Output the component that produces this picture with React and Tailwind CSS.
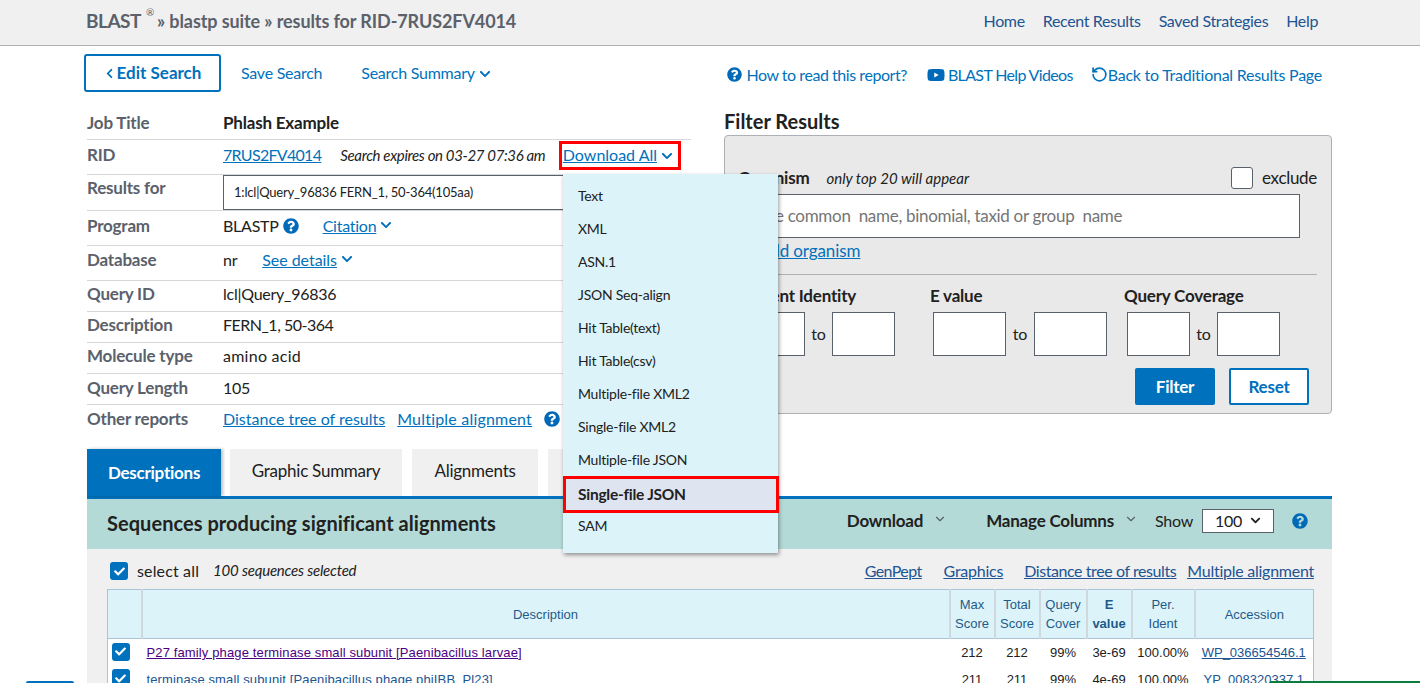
import React from "react";
import { FaChevronDown, FaChevronLeft, FaQuestionCircle, FaYoutube, FaCheck } from "react-icons/fa";
import { RotateCcw, ChevronDown } from "lucide-react";

const Q = ({ c = "" }) => <FaQuestionCircle className={"inline text-[#0069b8] " + c} size={16} />;
const Chev = ({ s = 12 }) => <FaChevronDown className="inline text-[#0071bc] ml-1 mb-[2px]" size={s} />;
const Link = ({ children, c = "" }) => <a className={"text-[#0071bc] underline " + c}>{children}</a>;

function Row({ label, h, children, last, labelClass = "", rowClass = "pb-[4px]" }) {
  return (
    <div className={"flex items-center " + rowClass + " " + (last ? "" : "border-b border-[#d6d7d9]")} style={{ height: h }}>
      <div className={"w-[136px] shrink-0 font-bold text-[17px] tracking-[-0.2px] text-[#5b616b] " + labelClass}>{label}</div>
      <div className="flex items-center flex-1 min-w-0 h-full text-[#212121]">{children}</div>
    </div>
  );
}

const Box = ({ w }) => <div className="h-[44px] bg-white border border-[#5b616b]" style={{ width: w }} />;

function Check({ s = 18 }) {
  return (
    <span className="inline-flex items-center justify-center bg-[#0071bc] rounded-[3px] text-white" style={{ width: s, height: s }}>
      <FaCheck size={s - 7} />
    </span>
  );
}

const items = ["Text", "XML", "ASN.1", "JSON Seq-align", "Hit Table(text)", "Hit Table(csv)", "Multiple-file XML2", "Single-file XML2", "Multiple-file JSON"];

export default function App() {
  return (
    <div className="relative h-[683px] overflow-hidden bg-white text-[16px] tracking-[-0.25px]" style={{ fontFamily: '"Lato","Liberation Sans",sans-serif' }}>
      <header className="h-[46px] bg-[#f0f0f0] border-b border-[#aeb0b5] flex items-center pb-[3px] pl-[86px] pr-[102px]">
        <div className="text-[#5b616b] font-bold text-[18px] flex items-center">
          <span className="text-[19px] tracking-[-0.5px]">BLAST</span>
          <sup className="text-[10px] font-normal ml-[5px] mr-[3px] -mt-[8px]">®</sup>
          <span className="tracking-[-0.1px]">» blastp suite » results for RID-7RUS2FV4014</span>
        </div>
        <nav className="ml-auto flex gap-[18px] text-[#205493] tracking-[-0.35px]">
          <a>Home</a><a>Recent Results</a><a>Saved Strategies</a><a>Help</a>
        </nav>
      </header>

      <div className="ml-[84px] w-[1248px]">
        <div className="h-[38px] mt-[8px] flex items-center">
          <button className="w-[137px] h-[38px] border-2 border-[#0071bc] rounded-[3px] text-[#0071bc] text-[17px] tracking-[0] font-bold flex items-center justify-center">
            <FaChevronLeft size={11} className="mr-[2px]" />Edit Search
          </button>
          <a className="ml-[20px] text-[#0071bc]">Save Search</a>
          <a className="ml-[39px] text-[#0071bc]">Search Summary<Chev /></a>
          <div className="ml-auto mr-[10px] flex items-center text-[#0071bc] mt-[3px]">
            <FaQuestionCircle size={15} className="text-[#0069b8] mr-[4px]" />
            <span className="tracking-[-0.45px]">How to read this report?</span>
            <FaYoutube size={18} className="text-[#0069b8] ml-[20px] mr-[3px]" />
            <span className="tracking-[-0.65px]">BLAST Help Videos</span>
            <RotateCcw size={17} strokeWidth={2.4} className="text-[#0071bc] ml-[18px]" />
            <span>Back to Traditional Results Page</span>
          </div>
        </div>

        <div className="flex mt-[16px] pl-[3px]">
          <div className="w-[604px] shrink-0">
            <Row label="Job Title" h={32} rowClass="pb-[2px]"><b className="font-bold text-[17px] tracking-[-0.2px]">Phlash Example</b></Row>
            <Row label="RID" h={35}>
              <Link c="tracking-[-0.7px]">7RUS2FV4014</Link>
              <i className="ml-[19px] text-[15px] tracking-[-0.35px] text-[#212121]">Search expires on 03-27 07:36 am</i>
              <a className="ml-auto text-[#0071bc] underline decoration-[#0071bc] tracking-[0]">Download All</a>
              <span className="mr-[18px]"><Chev /></span>
            </Row>
            <Row label="Results for" h={36} rowClass="" labelClass="-mt-[9px]">
              <div className="w-[350px] h-[35px] self-end border border-[#5b616b] flex items-center pl-[10px] text-[13px] tracking-[-0.2px]">1:lcl|Query_96836 FERN_1, 50-364(105aa)</div>
            </Row>
            <Row label="Program" h={35}>
              <span>BLASTP</span><Q c="ml-[4px]" /><Link c="ml-[24px]">Citation</Link><Chev />
            </Row>
            <Row label="Database" h={35} rowClass="pb-[6px]"><span>nr</span><Link c="ml-[25px] tracking-[-0.05px]">See details</Link><Chev /></Row>
            <Row label="Query ID" h={31}>lcl|Query_96836</Row>
            <Row label="Description" h={31}><span className="tracking-[-0.5px]">FERN_1, 50-364</span></Row>
            <Row label="Molecule type" h={31}><span className="tracking-[0.25px]">amino acid</span></Row>
            <Row label="Query Length" h={31} rowClass="pb-[3px]">105</Row>
            <Row label="Other reports" h={31} last>
              <Link c="tracking-[0]">Distance tree of results</Link><Link c="ml-[12px] tracking-[0.2px]">Multiple alignment</Link><Q c="ml-[12px]" />
            </Row>
          </div>

          <div className="ml-[33px] w-[608px]">
            <h2 className="font-bold text-[20px] tracking-[0] text-[#212121] leading-[24px] mt-[1px]">Filter Results</h2>
            <div className="mt-[2px] h-[279px] bg-[#e9e9e9] border border-[#aeb0b5] rounded-[4px] pl-[13px] pr-[14px] relative">
              <div className="flex items-center h-[22px] mt-[31px]">
                <b className="font-bold text-[17px] tracking-[-0.2px] text-[#212121]">Organism</b>
                <i className="ml-[17px] text-[15px] tracking-[0] text-[#212121]">only top 20 will appear</i>
                <span className="ml-auto w-[22px] h-[22px] bg-white border border-[#5b616b] rounded-[3px]" />
                <span className="ml-[9px] text-[17px] tracking-[-0.3px] text-[#212121]">exclude</span>
              </div>
              <div className="mt-[5px] w-[562px] h-[44px] bg-white border border-[#5b616b] flex items-center pl-[10px] text-[#757575] text-[17px] tracking-[-0.3px] whitespace-pre">{"Type common  name, binomial, taxid or group  name"}</div>
              <Link c="block mt-[1px] ml-[21px] leading-[24px] text-[17px] tracking-[-0.1px]">Add organism</Link>
              <div className="mt-[11px] border-t border-[#aeb0b5]" />
              <div className="flex mt-[10px] font-bold text-[17px] tracking-[-0.2px] text-[#212121] leading-[22px]">
                <span className="w-[192px]">Percent Identity</span>
                <span className="w-[194px]">E value</span>
                <span>Query Coverage</span>
              </div>
              <div className="flex items-center mt-[5px] text-[#212121]">
                <Box w={67} /><span className="w-[27px] text-center">to</span><Box w={63} />
                <span className="w-[38px]" />
                <Box w={73} /><span className="w-[28px] text-center">to</span><Box w={73} />
                <span className="w-[20px]" />
                <Box w={63} /><span className="w-[27px] text-center">to</span><Box w={63} />
              </div>
              <div className="flex justify-end gap-[14px] mt-[12px] mr-[8px]">
                <button className="w-[80px] h-[37px] bg-[#0071bc] text-white font-bold text-[17px] rounded-[2px]">Filter</button>
                <button className="w-[80px] h-[37px] bg-white border-2 border-[#0071bc] text-[#0071bc] font-bold text-[17px] rounded-[2px]">Reset</button>
              </div>
            </div>
          </div>
        </div>

        <div className="pl-[3px] w-[1248px] mt-[13px]">
          <div className="flex items-end h-[47px]">
            <div className="w-[134px] h-[47px] bg-[#0071bc] text-white font-bold text-[17px] flex items-center justify-center shadow-[2px_0_3px_rgba(0,0,0,0.25)]">Descriptions</div>
            <div className="ml-[9px] w-[172px] h-[47px] pb-[3px] bg-[#f0f0f0] text-[#212121] text-[17px] flex items-center justify-center">Graphic Summary</div>
            <div className="ml-[10px] w-[126px] h-[47px] pb-[3px] bg-[#f0f0f0] text-[#212121] text-[17px] flex items-center justify-center">Alignments</div>
            <div className="ml-[10px] w-[125px] h-[47px] pb-[3px] bg-[#f0f0f0] text-[#212121] text-[17px] flex items-center justify-center">Taxonomy</div>
          </div>
          <div className="border-t-[3px] border-[#0071bc] h-[53px] bg-[#b3dad7] flex items-center pl-[20px] pr-[24px]">
            <h3 className="font-bold text-[20px] tracking-[0.04px] text-[#212121] mb-[2px]">Sequences producing significant alignments</h3>
            <div className="ml-auto flex items-center text-[#212121] mb-[7px]">
              <b className="font-bold text-[17px] tracking-[-0.2px]">Download</b><ChevronDown size={14} className="ml-[10px] mr-[39px] mb-[3px] text-[#5b616b]" />
              <b className="font-bold text-[17px] tracking-[-0.2px]">Manage Columns</b><ChevronDown size={14} className="ml-[10px] mr-[17px] mb-[3px] text-[#5b616b]" />
              <span>Show</span>
              <span className="ml-[9px] w-[72px] h-[24px] bg-white border border-[#5b616b] flex items-center pl-[12px]">100<FaChevronDown size={11} className="ml-[8px]" /></span>
              <Q c="ml-[18px]" />
            </div>
          </div>
          <div className="bg-[#f0f0f0] pl-[20px] pr-[18px] h-[200px]">
            <div className="h-[40px] pt-[3px] flex items-center">
              <span className="ml-[3px]"><Check /></span>
              <span className="ml-[9px] text-[#212121] tracking-[0.15px]">select all</span>
              <i className="ml-[14px] text-[15px] tracking-[-0.2px] text-[#212121]">100 sequences selected</i>
              <div className="ml-auto flex text-[#205493] underline">
                <a className="tracking-[-0.6px]">GenPept</a><a className="ml-[22px]">Graphics</a><a className="ml-[21px] tracking-[-0.42px]">Distance tree of results</a><a className="ml-[11px]">Multiple alignment</a>
              </div>
            </div>
            <table className="w-[1207px] table-fixed border border-[#a9c4d6] bg-white text-[13px] text-center border-collapse" style={{ fontFamily: '"Liberation Sans",sans-serif', letterSpacing: 0 }}>
              <colgroup>
                <col className="w-[34px]" /><col /><col className="w-[45px]" /><col className="w-[45px]" /><col className="w-[47px]" /><col className="w-[45px]" /><col className="w-[63px]" /><col className="w-[119px]" />
              </colgroup>
              <thead className="bg-[#dcf4f9] text-[#1f5a8a] leading-[19px]">
                <tr className="h-[49px] border-b border-[#a9c4d6]">
                  <th className="font-normal border-r-2 border-[#cfd8dc]" />
                  <th className="font-normal border-r-2 border-[#cfd8dc]">Description</th>
                  <th className="font-normal border-r-2 border-[#cfd8dc]">Max<br />Score</th>
                  <th className="font-normal border-r-2 border-[#cfd8dc]">Total<br />Score</th>
                  <th className="font-normal border-r-2 border-[#cfd8dc]">Query<br />Cover</th>
                  <th className="font-bold border-r-2 border-[#cfd8dc]">E<br />value</th>
                  <th className="font-normal border-r-2 border-[#cfd8dc]">Per.<br />Ident</th>
                  <th className="font-normal">Accession</th>
                </tr>
              </thead>
              <tbody className="text-[#212121]">
                <tr className="h-[28px]">
                  <td className="pr-[8px]"><Check /></td>
                  <td className="text-left pl-[5px]"><a className="text-[#4b0082] underline tracking-[0.13px]">P27 family phage terminase small subunit [Paenibacillus larvae]</a></td>
                  <td>212</td><td>212</td><td>99%</td><td>3e-69</td><td>100.00%</td>
                  <td><a className="text-[#205493] underline">WP_036654546.1</a></td>
                </tr>
                <tr className="h-[26px]">
                  <td className="pr-[8px]"><Check /></td>
                  <td className="text-left pl-[5px]"><a className="text-[#205493] underline tracking-[0.13px]">terminase small subunit [Paenibacillus phage phiIBB_Pl23]</a></td>
                  <td>211</td><td>211</td><td>99%</td><td>4e-69</td><td>100.00%</td>
                  <td><a className="text-[#205493] underline">YP_008320337.1</a></td>
                </tr>
              </tbody>
            </table>
          </div>
        </div>
      </div>

      {/* Download All highlight */}
      <div className="absolute left-[559px] top-[141px] w-[122px] h-[29px] border-[3px] border-[#f00] pointer-events-none" />

      {/* Dropdown menu */}
      <div className="absolute left-[563px] top-[174px] w-[215px] h-[379px] bg-[#dcf4f9] shadow-[1px_2px_4px_rgba(0,0,0,0.4)] text-[14px] text-[#212121]">
        <div className="flex flex-col pl-[15px]">
          {items.map((t) => (
            <div key={t} className="h-[33px] flex items-center relative top-[5px]">{t}</div>
          ))}
        </div>
        <div className="relative top-[5px] h-[37px] w-[216px] bg-[#dee5f1] border-[3px] border-[#f00] flex items-center pl-[12px] font-bold text-[15.5px]">Single-file JSON</div>
        <div className="h-[33px] flex items-center pl-[15px] relative top-[1px]">SAM</div>
      </div>

      {/* Page corner widgets */}
      <div className="absolute left-[26px] top-[681px] w-[48px] h-[2px] bg-[#0071bc] rounded-t-[2px]" />
      <div className="absolute left-[1270px] right-0 top-[681px] h-[2px] bg-[#0a7d3e]" />
    </div>
  );
}
